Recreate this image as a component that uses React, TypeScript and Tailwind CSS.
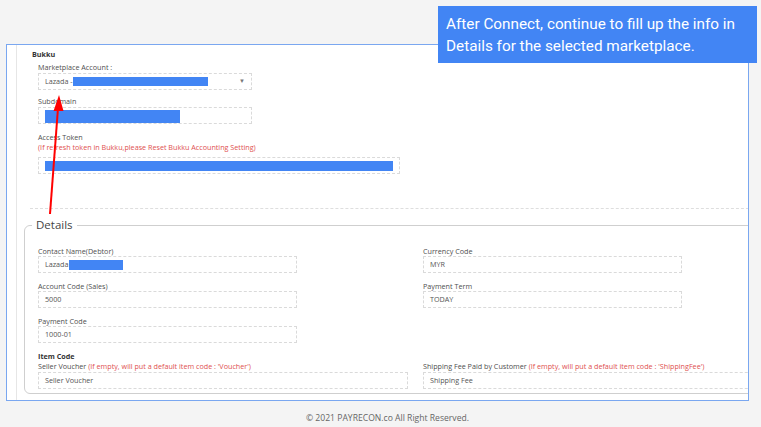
import type { ReactNode } from "react";

const Blue = ({ w, h, className = "" }: { w: number; h: number; className?: string }) => (
  <span
    className={`inline-block bg-[#4285f4] align-middle ${className}`}
    style={{ width: w, height: h }}
  />
);

function Label({ children, bold }: { children: ReactNode; bold?: boolean }) {
  return (
    <div
      className={`h-[10px] leading-[11px] text-[7.2px] whitespace-nowrap ${
        bold ? "font-bold text-[#333]" : "text-[#4f4f4f]"
      }`}
    >
      {children}
    </div>
  );
}

function Input({ children, w, className = "" }: { children?: ReactNode; w: number; className?: string }) {
  return (
    <div
      className={`h-[17px] border border-dashed border-[#dadada] bg-white flex items-center px-[6px] text-[7.2px] text-[#555] whitespace-nowrap overflow-hidden ${className}`}
      style={{ width: w }}
    >
      {children}
    </div>
  );
}

export default function App() {
  return (
    <div className="relative w-[761px] h-[427px] overflow-hidden bg-[#f4f4f4] font-['Open_Sans',sans-serif]">
      <div className="pt-[44px] pl-[6px]">
        <div className="w-[743px] h-[357px] border border-[#7aa7f0] bg-white overflow-hidden flex">
          <div className="ml-[9px] flex-1 border-l border-[#e6e6e6] pl-[15px]">
            <div className="mt-[4px]">
              <Label bold>Bukku</Label>
            </div>
            <div className="ml-[6px]">
              <div className="mt-[3px] mb-[1px]">
                <Label>Marketplace Account :</Label>
              </div>
              <Input w={214} className="justify-between">
                <span className="flex items-center">
                  Lazada -
                  <Blue w={135} h={9} />
                </span>
                <span className="text-[6px] text-[#777]">▼</span>
              </Input>

              <div className="mt-[6px] mb-[1px]">
                <Label>Subdomain</Label>
              </div>
              <Input w={214} className="!items-end px-[6px]">
                <Blue w={135} h={14} className="-mb-[1px]" />
              </Input>

              <div className="mt-[8px]">
                <Label>Access Token</Label>
                <div className="h-[10px] leading-[11px] text-[7.2px] text-[#e0504f] whitespace-nowrap">
                  (If refresh token in Bukku,please Reset Bukku Accounting Setting)
                </div>
              </div>
              <Input w={362} className="mt-[5px]">
                <Blue w={352} h={10} />
              </Input>
            </div>

            <div className="mt-[34px] -ml-[2px] border-t border-dashed border-[#dedede]" />

            <fieldset className="mt-[9px] -ml-[8px] w-[760px] border border-[#cfcfcf] rounded-[6px] pl-[13px] pt-[14px] pb-[4px]">
              <legend className="-ml-[6px] px-[4px] text-[11.5px] leading-[14px] text-[#444]">
                Details
              </legend>
              <div className="grid grid-cols-[259px_370px] gap-x-[126px]">
                <div>
                  <Label>Contact Name(Debtor)</Label>
                  <Input w={259}>
                    Lazada
                    <Blue w={54} h={10} />
                  </Input>
                  <div className="mt-[8px]">
                    <Label>Account Code (Sales)</Label>
                  </div>
                  <Input w={259}>5000</Input>
                  <div className="mt-[8px]">
                    <Label>Payment Code</Label>
                  </div>
                  <Input w={259}>1000-01</Input>
                </div>
                <div>
                  <Label>Currency Code</Label>
                  <Input w={259}>MYR</Input>
                  <div className="mt-[8px]">
                    <Label>Payment Term</Label>
                  </div>
                  <Input w={259}>TODAY</Input>
                </div>
              </div>
              <div className="mt-[8px]">
                <Label bold>Item Code</Label>
              </div>
              <div className="grid grid-cols-[370px_370px] gap-x-[15px]">
                <div>
                  <Label>
                    Seller Voucher{" "}
                    <span className="text-[#e0504f]">(If empty, will put a default item code : 'Voucher')</span>
                  </Label>
                  <Input w={370} className="mt-[1px]">Seller Voucher</Input>
                </div>
                <div>
                  <Label>
                    Shipping Fee Paid by Customer{" "}
                    <span className="text-[#e0504f]">(If empty, will put a default item code : 'ShippingFee')</span>
                  </Label>
                  <Input w={370} className="mt-[1px]">Shipping Fee</Input>
                </div>
              </div>
            </fieldset>
          </div>
        </div>
        <div className="mt-[11px] pl-[8px] text-center text-[8.6px] leading-[12px] text-[#666]">
          © 2021 PAYRECON.co All Right Reserved.
        </div>
      </div>

      <div className="absolute left-[438px] top-[6px] w-[319px] h-[57px] bg-[#4285f4] pl-[8px] pt-[7px] text-white font-['Roboto',sans-serif] text-[15.3px] leading-[22px] whitespace-nowrap">
        <div>After Connect, continue to fill up the info in</div>
        <div>Details for the selected marketplace.</div>
      </div>

      <svg className="absolute left-0 top-0" width="761" height="427" viewBox="0 0 761 427">
        <line x1="50" y1="214" x2="58" y2="108" stroke="#f00" strokeWidth="2" />
        <polygon points="59,95 53.5,111 63.5,111" fill="#f00" />
      </svg>
    </div>
  );
}
